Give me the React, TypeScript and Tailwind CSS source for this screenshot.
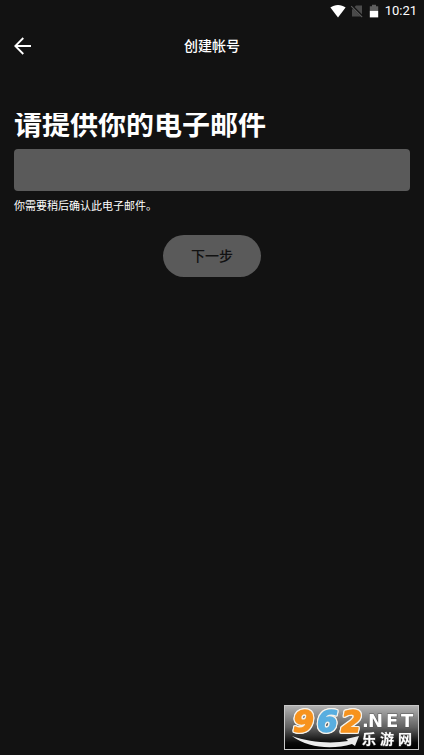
import React, { useState } from "react";

const StatusBar = () => {
  return (
    <div className="flex h-[22px] items-center justify-end pr-[7px]">
      <svg className="mr-1" width="16" height="14" viewBox="0 0 16 14" fill="#fff">
        <path d="M8 13.4 0.4 3.6C2.6 1.9 5.2 1 8 1s5.4 0.9 7.6 2.6z" />
      </svg>
      <svg className="mr-[5px]" width="14" height="14" viewBox="0 0 14 14">
        <path d="M6 1.5h6v11H2v-7z" fill="#4a4a4a" />
        <path d="M1.6 1.6 13 13" stroke="#121212" strokeWidth="2.4" />
        <path d="M1.2 2.2 12.2 13.2" stroke="#5e5e5e" strokeWidth="1.1" />
      </svg>
      <svg className="mr-[6px]" width="10" height="14" viewBox="0 0 10 14">
        <path d="M3 0.8h4v1.4h2.2v4.6H0.8V2.2H3z" fill="#5e5e5e" />
        <path d="M0.8 6.8h8.4v6.6H0.8z" fill="#fff" />
      </svg>
      <span className="font-['Roboto',sans-serif] text-[13px] leading-4 text-white">10:21</span>
    </div>
  );
};

const Watermark = () => {
  return (
    <div className="fixed right-[5px] bottom-[5px]">
      <svg width="135" height="45" viewBox="0 0 135 45" className="block overflow-visible">
        <defs>
          <linearGradient id="plate" x1="0" y1="0" x2="0" y2="1">
            <stop offset="0" stopColor="#b4b4b4" />
            <stop offset="0.5" stopColor="#606060" />
            <stop offset="0.85" stopColor="#080808" />
            <stop offset="1" stopColor="#000" />
          </linearGradient>
        </defs>
        <rect x="0.5" y="0.5" width="134" height="44" fill="url(#plate)" stroke="#c8c8c8" />
        <path
          d="M8 31C24 37 46 39 64 36L62 34L75 31L71 41L68 39C48 45 24 43 8 31z"
          fill="#ececec"
        />
        <g
          className="font-['DejaVu_Sans',sans-serif] [filter:drop-shadow(1px_0_0_#f6f2ea)_drop-shadow(-1px_0_0_#f6f2ea)_drop-shadow(0_1px_0_#f6f2ea)_drop-shadow(0_-1px_0_#f6f2ea)]"
          fontSize="30"
          fontWeight="700"
          fontStyle="italic"
          strokeWidth="1.4"
          strokeLinejoin="round"
        >
          <text x="9" y="27" fill="#f7931e" stroke="#f7931e">9</text>
          <text x="33" y="27" fill="#58aee0" stroke="#58aee0">6</text>
          <text x="57" y="27" fill="#f7931e" stroke="#f7931e">2</text>
        </g>
        <g fill="#fff" stroke="#555" strokeWidth="1" paintOrder="stroke">
          <g className="font-['DejaVu_Sans',sans-serif]" fontSize="18" fontWeight="700">
            <text x="78" y="22">.</text>
            <text x="84" y="22">N</text>
            <text x="102" y="22">E</text>
            <text x="117" y="22">T</text>
          </g>
          <g
            className="font-['Noto_Sans_CJK_SC',sans-serif]"
            fontSize="14"
            fontWeight="700"
          >
            <text x="78" y="39">乐</text>
            <text x="96" y="39">游</text>
            <text x="114" y="39">网</text>
          </g>
        </g>
      </svg>
    </div>
  );
};

export default function App() {
  const [email, setEmail] = useState("");

  return (
    <div
      lang="zh-CN"
      className="min-h-screen bg-[#121212] font-['Noto_Sans_CJK_SC',sans-serif] text-white"
    >
      <StatusBar />
      <header className="grid h-12 grid-cols-[1fr_auto_1fr] items-center px-3.5">
        <button type="button" aria-label="返回" className="w-max">
          <svg width="18" height="18" viewBox="0 0 18 18" fill="none" stroke="#fff" strokeWidth="1.8">
            <path d="M17 9H1.500M9.300 1 1.300 9l8 8" />
          </svg>
        </button>
        <h1 className="pb-0.5 text-sm font-medium">创建帐号</h1>
      </header>

      <form className="px-3.5 pt-[43px]" onSubmit={(e) => e.preventDefault()}>
        <label
          htmlFor="email"
          className="block h-9 overflow-hidden text-[28px] leading-5 font-bold whitespace-nowrap"
        >
          请提供你的电子邮件
        </label>
        <input
          id="email"
          type="email"
          value={email}
          onChange={(e) => setEmail(e.target.value)}
          className="block h-[42px] w-full rounded bg-[#5a5a5a] px-3 text-sm outline-none"
        />
        <p className="mt-1.5 text-[11px] leading-4">你需要稍后确认此电子邮件。</p>
        <button
          type="submit"
          className="mx-auto mt-[22px] block h-[42px] rounded-full bg-[#5a5a5a] px-7 pb-0.5 text-sm font-medium text-[#121212]"
        >
          下一步
        </button>
      </form>

      <Watermark />
    </div>
  );
}
